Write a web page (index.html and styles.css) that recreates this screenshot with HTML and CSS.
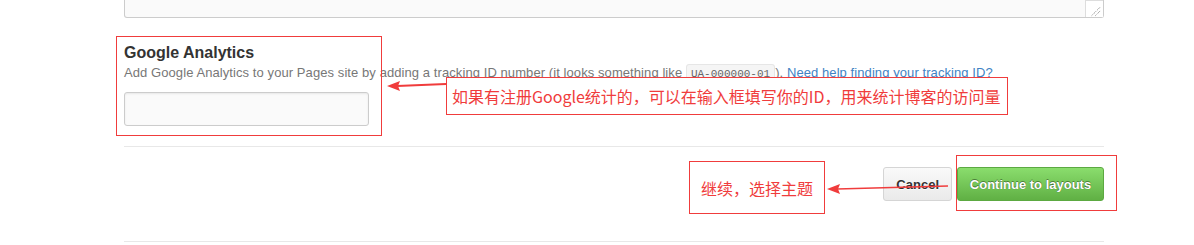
FILE: index.html
```html
<!DOCTYPE html>
<html lang="zh-CN">
<head>
    <meta charset="UTF-8">
    <title>GitHub Pages - Google Analytics</title>
    <link rel="stylesheet" href="styles.css">
</head>
<body>
    <div class="page">
        <div class="textarea-end">
            <span class="grip">
                <svg width="18" height="17" viewBox="0 0 18 17">
                    <path d="M6 15 L15 6 M10 15 L15 10" stroke="#777" stroke-width="1" stroke-dasharray="1 1"/>
                </svg>
            </span>
        </div>

        <div class="form-group">
            <h3>Google Analytics</h3>
            <p class="note">Add Google Analytics to your Pages site by adding a tracking ID number (it looks something like <code>UA-000000-01</code>). <a href="#">Need help finding your tracking ID?</a></p>
            <input type="text" class="text-input">
        </div>

        <div class="form-actions">
            <button class="btn">Cancel</button>
            <button class="btn btn-primary">Continue to layouts</button>
        </div>
    </div>

    <!-- anotaciones en rojo sobre la captura -->
    <div class="mark mark-ga"></div>
    <div class="mark mark-tip">如果有注册Google统计的，可以在输入框填写你的ID，用来统计博客的访问量</div>
    <div class="mark mark-next">继续，选择主题</div>
    <div class="mark mark-btn"></div>

    <svg class="arrow arrow-ga" width="60" height="12" viewBox="0 0 60 12">
        <path d="M59 4 L10 6" stroke="#f03c3c" stroke-width="2"/>
        <path d="M0 6 L13 1 L11 6 L13 11 Z" fill="#f03c3c"/>
    </svg>
    <svg class="arrow arrow-next" width="122" height="14" viewBox="0 0 122 14">
        <path d="M121 5 L10 8" stroke="#f03c3c" stroke-width="1.6"/>
        <path d="M0 8 L13 3 L11 8 L13 13 Z" fill="#f03c3c"/>
    </svg>
</body>
</html>
```

FILE: styles.css
```css
* {
    box-sizing: border-box;
}

body {
    margin: 0;
    position: relative;
    width: 1194px;
    height: 245px;
    overflow: hidden;
    background-color: #fff;
    font-family: "Liberation Sans", Arial, sans-serif;
    color: #333;
}

.page {
    width: 980px;
    margin-left: 124px;
}

.textarea-end {
    height: 18px;
    background-color: #fafafa;
    border: 1px solid #ccc;
    border-top: 0;
    border-radius: 0 0 3px 3px;
    display: flex;
    justify-content: flex-end;
}

.grip {
    width: 18px;
    height: 17px;
    background-color: #fff;
    border-left: 1px solid #ddd;
    border-top: 1px solid #ddd;
    display: flex;
}

.form-group {
    padding-top: 25px;
    padding-bottom: 20px;
}

.form-group h3 {
    margin: 0;
    font-size: 16px;
    line-height: 20px;
    font-weight: bold;
    color: #333;
}

.note {
    margin: 0;
    font-size: 13px;
    line-height: 20px;
    color: #777;
    letter-spacing: 0.08px;
    white-space: nowrap;
}

.note code {
    font-family: "Liberation Mono", "DejaVu Sans Mono", monospace;
    font-size: 11px;
    letter-spacing: 0;
    color: #666;
    background-color: #f5f5f5;
    border: 1px solid #e6e6e6;
    border-radius: 3px;
    padding: 3px 4px;
}

.note a {
    color: #4183c4;
    text-decoration: none;
}

.text-input {
    display: block;
    margin-top: 8px;
    width: 245px;
    height: 34px;
    background-color: #fafafa;
    border: 1px solid #ccc;
    border-radius: 3px;
    box-shadow: inset 0 1px 2px rgba(0, 0, 0, 0.075);
}

.form-actions {
    border-top: 1px solid #e8e8e8;
    border-bottom: 1px solid #e8e8e8;
    padding: 20px 0 40px;
    display: flex;
    justify-content: flex-end;
    gap: 5px;
}

.btn {
    height: 34px;
    padding: 0 12px;
    font-family: "Liberation Sans", Arial, sans-serif;
    font-size: 13px;
    font-weight: bold;
    white-space: nowrap;
    color: #333;
    background: linear-gradient(#fafafa, #eaeaea);
    border: 1px solid #d5d5d5;
    border-radius: 3px;
    text-shadow: 0 1px 0 rgba(255, 255, 255, 0.9);
}

.btn-primary {
    width: 147px;
    padding: 0;
    color: #fff;
    background: linear-gradient(#8add6d, #60b044);
    border-color: #5ca941;
    text-shadow: 0 -1px 0 rgba(0, 0, 0, 0.35), 0 0 1px rgba(0, 0, 0, 0.4);
}

.mark {
    position: absolute;
    border: 1px solid #f03c3c;
    color: #f03c3c;
    font-family: "Noto Sans CJK SC", sans-serif;
    font-size: 16px;
    display: flex;
    align-items: center;
}

.mark-ga {
    left: 116px;
    top: 36px;
    width: 266px;
    height: 100px;
}

.mark-tip {
    left: 446px;
    top: 77px;
    width: 562px;
    height: 38px;
    padding-left: 5px;
    background-color: #fff;
    white-space: nowrap;
}

.mark-next {
    left: 689px;
    top: 161px;
    width: 136px;
    height: 53px;
    justify-content: center;
}

.mark-btn {
    left: 956px;
    top: 155px;
    width: 161px;
    height: 56px;
}

.arrow {
    position: absolute;
}

.arrow-ga {
    left: 387px;
    top: 80px;
}

.arrow-next {
    left: 827px;
    top: 181px;
}
```
